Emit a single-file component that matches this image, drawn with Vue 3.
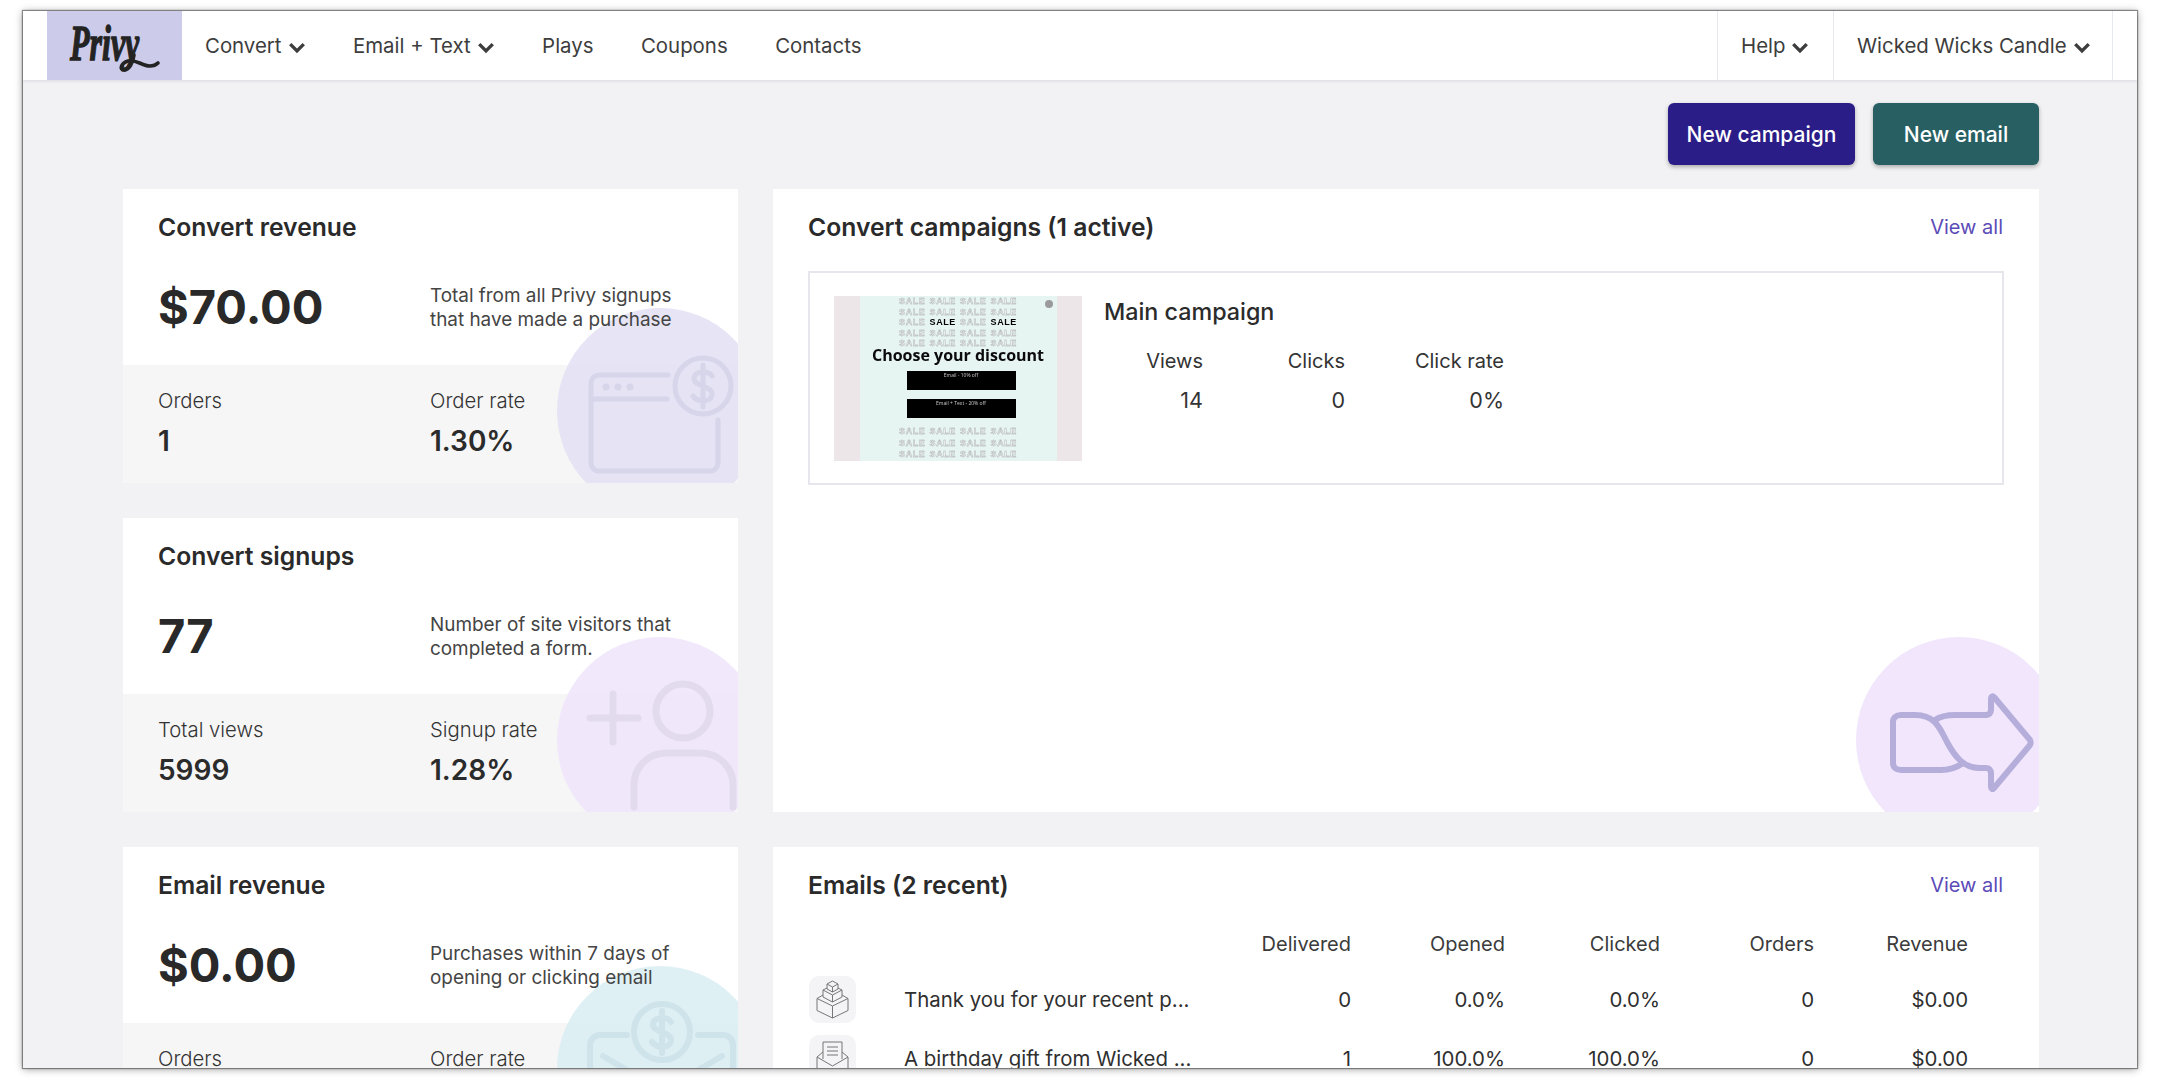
<script setup>
const navLeft = [
  { label: 'Convert', caret: true },
  { label: 'Email + Text', caret: true },
  { label: 'Plays' },
  { label: 'Coupons' },
  { label: 'Contacts' }
]

const statCards = [
  {
    icon: 'window',
    title: 'Convert revenue',
    value: '$70.00',
    desc: ['Total from all Privy signups', 'that have made a purchase'],
    stats: [['Orders', '1'], ['Order rate', '1.30%']]
  },
  {
    icon: 'person',
    title: 'Convert signups',
    value: '77',
    desc: ['Number of site visitors that', 'completed a form.'],
    stats: [['Total views', '5999'], ['Signup rate', '1.28%']]
  },
  {
    icon: 'mail',
    title: 'Email revenue',
    value: '$0.00',
    desc: ['Purchases within 7 days of', 'opening or clicking email'],
    stats: [['Orders', ''], ['Order rate', '']]
  }
]

const emails = [
  { icon: 'boxes', title: 'Thank you for your recent p...', cells: ['0', '0.0%', '0.0%', '0', '$0.00'] },
  { icon: 'letter', title: 'A birthday gift from Wicked ...', cells: ['1', '100.0%', '100.0%', '0', '$0.00'] }
]

const saleTop = ['SALE SALE SALE SALE', 'SALE SALE SALE SALE', null, 'SALE SALE SALE SALE', 'SALE SALE SALE SALE']
const saleBottom = ['SALE SALE SALE SALE', 'SALE SALE SALE SALE', 'SALE SALE SALE SALE']
</script>

<template>
  <div class="page">
    <div class="frame">
      <nav class="nav">
        <div class="logo">
          <svg width="98" height="58" viewBox="0 0 98 58">
            <text transform="translate(4 43) scale(0.64 1)" class="logo-text">Privy</text>
            <path d="M68 38c-1 8-5 15-10 15-5 0-3-7 4-9 8-2 14 5 22 5 3 0 6-1 8-3" fill="none" stroke="#232323" stroke-width="3.6" stroke-linecap="round" />
          </svg>
        </div>
        <div class="nav-links">
          <a v-for="item in navLeft" :key="item.label" class="nav-link">
            {{ item.label }}
            <svg v-if="item.caret" class="caret" viewBox="0 0 16 11"><path d="M2 2.500l6 6 6-6" /></svg>
          </a>
        </div>
        <div class="nav-right">
          <a class="nav-cell help">Help <svg class="caret" viewBox="0 0 16 11"><path d="M2 2.500l6 6 6-6" /></svg></a>
          <a class="nav-cell account">Wicked Wicks Candle <svg class="caret" viewBox="0 0 16 11"><path d="M2 2.500l6 6 6-6" /></svg></a>
        </div>
      </nav>

      <main class="content">
        <div class="actions">
          <button class="btn btn-purple">New campaign</button>
          <button class="btn btn-teal">New email</button>
        </div>

        <div class="grid">
          <section v-for="card in statCards" :key="card.title" class="card stat-card" :class="'stat-' + card.icon">
            <svg class="deco" width="206" height="206" viewBox="0 0 206 206">
              <template v-if="card.icon === 'window'">
                <circle cx="103" cy="103" r="103" fill="#e2dff3" fill-opacity="0.85" />
                <g fill="none" stroke="#d6d5ea" stroke-width="5" stroke-linecap="round">
                  <path d="M111 67H42a8 8 0 0 0-8 8v80a8 8 0 0 0 8 8h111a8 8 0 0 0 8-8v-43" />
                  <path d="M34 91h76" />
                  <circle cx="146" cy="78" r="28" />
                  <path d="M155 68c-3-5-17-6-18 2-1 9 19 7 18 17-1 8-15 7-19 1M146 57v42" />
                </g>
                <g fill="#d6d5ea"><circle cx="49" cy="79" r="3.5" /><circle cx="61" cy="79" r="3.5" /><circle cx="73" cy="79" r="3.5" /></g>
              </template>
              <template v-else-if="card.icon === 'person'">
                <circle cx="103" cy="103" r="103" fill="#efe5fb" fill-opacity="0.9" />
                <g fill="none" stroke="#e2dbed" stroke-width="7" stroke-linecap="round">
                  <path d="M56 57v48M33 81h48" />
                  <circle cx="126" cy="74" r="27" />
                  <path d="M77 170v-22a32 32 0 0 1 32-32h35a32 32 0 0 1 32 32v22" />
                </g>
              </template>
              <template v-else>
                <circle cx="103" cy="103" r="103" fill="#dbeef3" fill-opacity="0.9" />
                <g fill="none" stroke="#cfe3eb" stroke-width="6" stroke-linecap="round">
                  <circle cx="105" cy="66" r="28" />
                  <path d="M114 56c-3-5-17-6-18 2-1 9 19 7 18 17-1 8-15 7-19 1M105 45v42" />
                  <path d="M70 69H43a10 10 0 0 0-10 10v60M141 69h25a10 10 0 0 1 10 10v60" />
                  <path d="M46 90l34 20M165 90l-34 20" />
                </g>
              </template>
            </svg>
            <div class="stat-top">
              <h2 class="card-title">{{ card.title }}</h2>
              <div class="stat-main">
                <div class="big">{{ card.value }}</div>
                <p class="desc"><span v-for="line in card.desc" :key="line">{{ line }}</span></p>
              </div>
            </div>
            <div class="stat-bottom">
              <div v-for="s in card.stats" :key="s[0]" class="stat-cell">
                <div class="stat-label">{{ s[0] }}</div>
                <div v-if="s[1]" class="stat-value">{{ s[1] }}</div>
              </div>
            </div>
          </section>

          <section class="card campaigns">
            <svg class="deco" width="206" height="206" viewBox="0 0 206 206">
              <circle cx="103" cy="103" r="103" fill="#f1e6fc" />
              <g fill="none" stroke="#b5aedb" stroke-width="6" stroke-linecap="round" stroke-linejoin="round">
                <path d="M79 83c6-4 12-5 20-5h31c3 0 5-2 5-5V62c0-3 2-3 3-2l36 43c1 2 1 3 0 5l-36 43c-1 2-3 1-3-2v-13c0-3-2-5-5-5h-7c-15 0-24-11-32-26-7-13-11-27-32-27H45c-5 0-8 3-8 7v41c0 4 3 7 8 7h40c8 0 15-2 22-7" />
              </g>
            </svg>
            <header class="card-head">
              <h2 class="card-title">Convert campaigns (1 active)</h2>
              <a class="view-all">View all</a>
            </header>
            <div class="campaign-box">
              <div class="thumb">
                <div class="popup">
                  <span class="popup-close"></span>
                  <div class="sale-rows">
                    <div v-for="(row, i) in saleTop" :key="i" class="sale-row">
                      <template v-if="row">{{ row }}</template>
                      <template v-else>SALE <b>SALE</b> SALE <b>SALE</b></template>
                    </div>
                  </div>
                  <div class="popup-title">Choose your discount</div>
                  <div class="popup-btn">Email - 10% off</div>
                  <div class="popup-btn">Email + Text - 20% off</div>
                  <div class="sale-rows lower">
                    <div v-for="(row, i) in saleBottom" :key="i" class="sale-row">{{ row }}</div>
                  </div>
                </div>
              </div>
              <div class="campaign-info">
                <h3 class="campaign-name">Main campaign</h3>
                <div class="campaign-stats">
                  <span>Views</span><span>Clicks</span><span>Click rate</span>
                  <span class="num">14</span><span class="num">0</span><span class="num">0%</span>
                </div>
              </div>
            </div>
          </section>

          <section class="card emails">
            <header class="card-head">
              <h2 class="card-title">Emails (2 recent)</h2>
              <a class="view-all">View all</a>
            </header>
            <div class="email-table">
              <div class="email-row email-header">
                <span></span><span></span>
                <span>Delivered</span><span>Opened</span><span>Clicked</span><span>Orders</span><span>Revenue</span>
              </div>
              <div v-for="mail in emails" :key="mail.title" class="email-row">
                <span class="email-icon">
                  <svg v-if="mail.icon === 'boxes'" width="33" height="39" viewBox="0 0 33 39" fill="none" stroke="#777" stroke-width="1">
                    <path d="M16.500 1l5.500 3v5l-5.500 3-5.500-3V4zM11 4l5.500 3L22 4M16.500 7v5" />
                    <path d="M11 8l-4 2v7l9.500 5 9.500-5v-7l-4-2M7 10l9.500 5 9.500-5M16.500 15v7" />
                    <path d="M7 15l-6 3.500v12l15.500 7.500L32 30.500v-12L26 15M1 18.500L16.500 26 32 18.500M16.500 26v12" />
                  </svg>
                  <svg v-else width="33" height="39" viewBox="0 0 33 39" fill="none" stroke="#777" stroke-width="1">
                    <path d="M7 20V3h19v17M11 8h11M11 12h11M11 16h11" />
                    <path d="M7 13L1 18v19h31V18l-6-5M1 18l15.500 9L32 18" />
                  </svg>
                </span>
                <span class="email-title">{{ mail.title }}</span>
                <span v-for="(c, i) in mail.cells" :key="i">{{ c }}</span>
              </div>
            </div>
          </section>
        </div>
      </main>
    </div>
  </div>
</template>

<style>
html, body { margin: 0; background: #fff; overflow: hidden; }
</style>

<style scoped>
.page {
  width: 2160px;
  height: 1080px;
  padding: 11px 23px 12px 23px;
  box-sizing: border-box;
  font-family: Inter, "Liberation Sans", sans-serif;
  color: #2b2b2b;
}
.frame {
  height: 100%;
  overflow: hidden;
  background: #f2f2f5;
  box-shadow: 0 0 1px 1px rgba(70, 70, 70, 0.6), 0 1px 8px rgba(0, 0, 0, 0.4);
  display: flex;
  flex-direction: column;
}

.nav {
  flex: none;
  height: 69px;
  background: #fff;
  display: flex;
  padding: 0 24px;
  box-shadow: 0 1px 3px rgba(40, 40, 70, 0.12);
  position: relative;
  z-index: 2;
}
.logo {
  width: 135px;
  background: #cccbea;
  display: flex;
  align-items: center;
  justify-content: center;
}
.logo-text {
  font-family: "Liberation Serif", serif;
  font-weight: 700;
  font-style: italic;
  font-size: 50px;
  fill: #232323;
  stroke: #232323;
  stroke-width: 1.4px;
}
.nav-links {
  display: flex;
  align-items: center;
  gap: 47.500px;
  padding-left: 23px;
  flex: 1;
}
.nav-link, .nav-cell {
  font-size: 20.400px;
  color: #3d3d3d;
  display: flex;
  align-items: center;
  gap: 6px;
  white-space: nowrap;
}
.caret {
  width: 18px;
  height: 13px;
  margin-top: 3px;
}
.caret path {
  fill: none;
  stroke: #3d3d3d;
  stroke-width: 3;
}
.nav-right {
  display: flex;
  border-right: 1px solid #e6e8f0;
}
.nav-cell {
  border-left: 1px solid #e6e8f0;
  box-sizing: border-box;
  padding-left: 23px;
}
.help { width: 116px; }
.account { width: 279px; }

.content {
  padding: 23px 98px 0 100px;
}
.actions {
  display: flex;
  justify-content: flex-end;
  gap: 18px;
  height: 62px;
  margin-bottom: 24px;
}
.btn {
  border: none;
  border-radius: 6px;
  color: #fff;
  font-family: inherit;
  font-size: 21px;
  font-weight: 450;
  box-shadow: 0 2px 4px rgba(0, 0, 0, 0.3);
}
.btn-purple { width: 187px; background: #2b1d87; }
.btn-teal { width: 166px; background: #275f63; }

.grid {
  display: grid;
  grid-template-columns: 615px 1266px;
  grid-template-rows: 294px 294px auto;
  gap: 35px;
}
.card {
  background: #fff;
  position: relative;
  overflow: hidden;
}
.deco {
  position: absolute;
  top: 119px;
  left: 434px;
}
.card-title {
  margin: 0;
  font-size: 24.700px;
  font-weight: 600;
  color: #2a2a2a;
}

.stat-card {
  display: flex;
  flex-direction: column;
}
.stat-person { grid-column: 1; grid-row: 2; }
.stat-mail { grid-column: 1; grid-row: 3; height: 294px; }
.stat-top {
  height: 176px;
  box-sizing: border-box;
  padding: 23px 35px 0;
  position: relative;
}
.stat-main {
  display: flex;
  align-items: center;
  margin-top: 31px;
  height: 66px;
}
.big {
  width: 272px;
  font-size: 47px;
  font-weight: 700;
  color: #292929;
}
.desc {
  margin: 0;
  padding-top: 4px;
  font-size: 18.900px;
  line-height: 24px;
  color: #444;
}
.desc span { display: block; white-space: nowrap; }
.stat-bottom {
  flex: 1;
  background: #f6f6f6;
  display: flex;
  padding: 23px 35px 0;
}
.stat-cell { width: 272px; position: relative; }
.stat-label {
  font-size: 20.300px;
  font-weight: 300;
  color: #333;
}
.stat-value {
  margin-top: 11px;
  font-size: 28px;
  font-weight: 600;
  color: #2b2b2b;
}

.campaigns {
  grid-column: 2;
  grid-row: 1 / span 2;
}
.campaigns .deco {
  top: 448px;
  left: 1083px;
}
.card-head {
  display: flex;
  justify-content: space-between;
  align-items: center;
  padding: 23px 36px 0 35px;
}
.view-all {
  font-size: 20px;
  color: #5b4bb7;
}
.campaign-box {
  margin: 29px 35px 0;
  height: 214px;
  box-sizing: border-box;
  border: 2px solid #e6e6ec;
  padding: 23px 24px;
  display: flex;
  gap: 22px;
}
.thumb {
  width: 248px;
  height: 165px;
  background: #ece6e8;
  display: flex;
  justify-content: center;
  overflow: hidden;
}
.popup {
  width: 197px;
  background: #e6f4f2;
  position: relative;
  display: flex;
  flex-direction: column;
  align-items: center;
  font-family: "Open Sans", sans-serif;
  filter: blur(0.4px);
}
.popup-close {
  position: absolute;
  top: 4px;
  right: 4px;
  width: 8px;
  height: 8px;
  border-radius: 50%;
  background: #9a9a9a;
}
.sale-rows {
  height: 52px;
  font-family: "Liberation Sans", sans-serif;
  font-size: 9px;
  line-height: 10.500px;
  font-weight: 700;
  letter-spacing: 0.6px;
  word-spacing: 1px;
  text-align: center;
  color: #eef5f4;
  -webkit-text-stroke: 0.4px #a8a8a8;
  white-space: nowrap;
}
.sale-rows b {
  color: #000;
  -webkit-text-stroke: 0;
}
.sale-rows.lower {
  height: 36px;
  margin-top: 8px;
  line-height: 11.500px;
}
.popup-title {
  font-size: 16px;
  font-weight: 700;
  color: #0b0b0b;
  line-height: 18px;
  margin-top: -2px;
  white-space: nowrap;
}
.popup-btn {
  width: 109px;
  height: 20px;
  margin-top: 9px;
  margin-left: 6px;
  background: #000;
  color: #ccc;
  font-size: 5px;
  line-height: 8px;
  text-align: center;
}
.popup-title + .popup-btn { margin-top: 7px; }
.campaign-name {
  margin: 1px 0 0;
  font-size: 23.300px;
  font-weight: 500;
  color: #2b2b2b;
}
.campaign-stats {
  margin-top: 23px;
  display: grid;
  grid-template-columns: 99px 142px 159px;
  row-gap: 14px;
  font-size: 20px;
  text-align: right;
  color: #333;
}
.campaign-stats .num { font-size: 21.500px; }

.emails {
  grid-column: 2;
  grid-row: 3;
  height: 400px;
}
.email-table { padding: 0 0 0 35px; margin-top: 22px; }
.email-row {
  display: grid;
  grid-template-columns: 96px 290px 157px 154px 155px 154px 154px;
  align-items: center;
  height: 59px;
  font-size: 20.400px;
  color: #2f2f2f;
}
.email-row > span:nth-child(n + 3) { text-align: right; }
.email-header {
  height: 44px;
  margin-bottom: 4px;
  font-size: 20px;
  color: #3b3b3b;
}
.email-icon {
  width: 47px;
  height: 47px;
  margin-left: 1px;
  border-radius: 10px;
  background: #f4f3f5;
  display: flex;
  align-items: center;
  justify-content: center;
}
.email-title { white-space: nowrap; }
</style>
